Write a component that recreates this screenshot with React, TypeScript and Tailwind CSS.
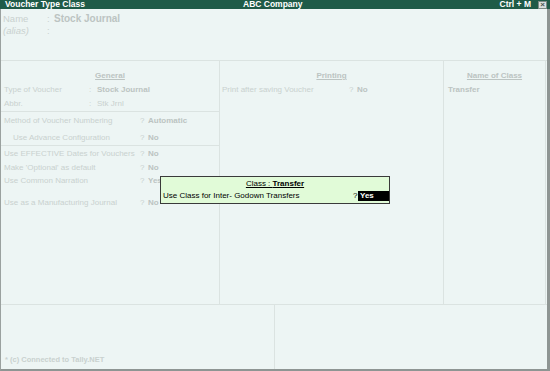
import React from "react";

const faded = "text-[#c9d1cf]";
const fadedBold = "font-bold text-[#bcc4c2]";

const Row = ({
  label,
  mark,
  value,
  h,
  indent = false,
  markX = 139,
  plain = false,
}: {
  label: string;
  mark: string;
  value: string;
  h: string;
  indent?: boolean;
  markX?: number;
  plain?: boolean;
}) => (
  <div className={`flex items-center ${h}`}>
    <span className={`${indent ? "pl-[12px]" : "pl-[3px]"} ${faded}`} style={{ width: markX }}>
      {label}
    </span>
    <span className={`${faded} w-[8px]`}>{mark}</span>
    <span className={plain ? faded : fadedBold}>{value}</span>
  </div>
);

const App = () => {
  return (
    <div
      className="relative w-[550px] h-[371px] flex flex-col bg-[#edf5f4] text-[8px] leading-[10px] overflow-hidden"
      style={{ fontFamily: '"Liberation Sans", Arial, sans-serif' }}
    >
      {/* title bar */}
      <div className="h-[9px] bg-[#1f5b48] flex items-center text-white font-bold text-[8.5px] leading-[9px]">
        <span className="pl-[5px] w-[243px]">Voucher Type Class</span>
        <span className="flex-1">ABC Company</span>
        <span className="pr-[7px]">Ctrl + M</span>
        <span className="w-[9px] h-[8px] mr-[3px] bg-[#d9dfdd] border border-[#7d8985] text-[#4b5552] text-[8px] leading-[6px] flex items-center justify-center">
          ×
        </span>
      </div>

      <div className="flex-1 flex flex-col border-l border-[#9aa19f] border-r-[3px] border-r-[#8e9593] border-b-[2px] border-b-[#8e9593]">
        {/* name block */}
        <div className="h-[52px] border-b border-[#dbe3e1] pt-[4px] text-[9.5px] leading-[12px]">
          <div className="flex">
            <span className={`pl-[2px] w-[46px] ${faded}`}>Name</span>
            <span className={`w-[7px] ${faded}`}>:</span>
            <span className={`text-[10px] ${fadedBold}`}>Stock Journal</span>
          </div>
          <div className="flex">
            <span className={`pl-[2px] w-[46px] italic ${faded}`}>(alias)</span>
            <span className={`w-[7px] ${faded}`}>:</span>
          </div>
        </div>

        {/* three columns */}
        <div className="h-[244px] flex border-b border-[#dbe3e1]">
          <div className="w-[219px] border-r border-[#dbe3e1] flex flex-col">
            <div className="h-[22px] pt-[10px] text-center">
              <span className={`${fadedBold} underline`}>General</span>
            </div>
            <Row label="Type of Voucher" mark=":" value="Stock Journal" h="h-[14px]" markX={88} />
            <Row label="Abbr." mark=":" value="Stk Jrnl" h="h-[14px]" markX={88} plain />
            <div className="border-t border-[#dbe3e1]" />
            <Row label="Method of Voucher Numbering" mark="?" value="Automatic" h="h-[18px]" />
            <Row label="Use Advance Configuration" mark="?" value="No" h="h-[15px]" indent />
            <div className="border-t border-[#dbe3e1]" />
            <Row label="Use EFFECTIVE Dates for Vouchers" mark="?" value="No" h="h-[15px]" />
            <Row label="Make 'Optional' as default" mark="?" value="No" h="h-[13px]" />
            <Row label="Use Common Narration" mark="?" value="Yes" h="h-[14px]" />
            <div className="h-[8px]" />
            <Row label="Use as a Manufacturing Journal" mark="?" value="No" h="h-[14px]" />
          </div>
          <div className="w-[224px] border-r border-[#dbe3e1] flex flex-col">
            <div className="h-[22px] pt-[10px] text-center">
              <span className={`${fadedBold} underline`}>Printing</span>
            </div>
            <div className="flex items-center h-[14px]">
              <span className={`pl-[2px] w-[129px] ${faded}`}>Print after saving Voucher</span>
              <span className={`w-[8px] ${faded}`}>?</span>
              <span className={fadedBold}>No</span>
            </div>
          </div>
          <div className="w-[102px] border-r border-[#dbe3e1] flex flex-col">
            <div className="h-[22px] pt-[10px] text-center">
              <span className={`${fadedBold} underline`}>Name of Class</span>
            </div>
            <div className={`h-[14px] flex items-center pl-[4px] ${fadedBold}`}>Transfer</div>
          </div>
        </div>

        {/* bottom panels */}
        <div className="flex-1 flex">
          <div className="w-[274px] border-r border-[#dbe3e1] flex flex-col justify-end pb-[4px] pl-[4px]">
            <span className={`${faded} font-bold text-[7.5px]`}>* (c) Connected to Tally.NET</span>
          </div>
          <div className="flex-1" />
        </div>
      </div>

      {/* popup */}
      <div className="absolute left-[160px] top-[176px] w-[230px] h-[28px] bg-[#e1fbd8] border border-[#3a3a3a] flex flex-col">
        <div className="h-[13px] flex items-center justify-center text-black">
          <span className="underline">
            Class : <span className="font-bold">Transfer</span>
          </span>
        </div>
        <div className="h-[12px] flex items-center text-black">
          <span className="pl-[2px] w-[192px]">Use Class for Inter- Godown Transfers</span>
          <span className="w-[4px]">?</span>
          <span className="ml-[1px] bg-black text-white font-bold w-[31px] h-[10px] leading-[10px] pl-[2px]">Yes</span>
        </div>
      </div>
    </div>
  );
};

export default App;
